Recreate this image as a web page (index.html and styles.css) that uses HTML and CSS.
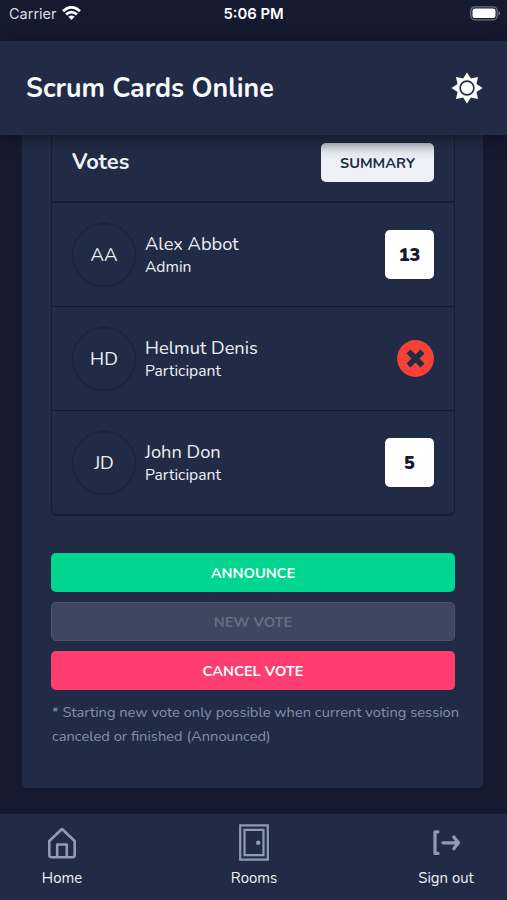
FILE: index.html
```html
<!DOCTYPE html>
<html lang="en">
<head>
<meta charset="utf-8">
<title>Scrum Cards Online</title>
<link rel="stylesheet" href="styles.css">
</head>
<body>
<div class="app">
  <div class="status">
    <div class="status-left"><span class="carrier">Carrier</span>
      <svg class="wifi" width="19" height="15" viewBox="0 0 19 15" fill="none" stroke="#fff" stroke-width="2.8"><path d="M1.100 5.200C6-.1 13-.1 17.900 5.200M4.100 8.600c3.300-3.400 7.500-3.400 10.800 0"/><path d="M9.500 14L6.400 10.800q3.100-2.600 6.200 0z" fill="#fff" stroke="none"/></svg>
    </div>
    <span class="clock">5:06 PM</span>
    <svg class="battery" width="31" height="15" viewBox="0 0 31 15"><rect x=".8" y=".8" width="26.400" height="13" rx="4" fill="none" stroke="#6d7182" stroke-width="1.300"/><rect x="2.500" y="2.500" width="23" height="9.600" rx="2.300" fill="#fff"/><path d="M28.500 5v4.600q1.700-.6 1.700-2.300T28.500 5z" fill="#6d7182"/></svg>
  </div>
  <header class="header">
    <h1 class="title">Scrum Cards Online</h1>
    <svg class="sun" width="32" height="32" viewBox="-16 -16 32 32"><path fill="#fff" d="M0-15.500L3.900-9.500 11-11 9.500-3.900 15.500 0 9.500 3.900 11 11 3.900 9.500 0 15.500-3.900 9.500-11 11-9.500 3.900-15.500 0-9.500-3.900-11-11-3.900-9.500z"/><circle r="6.900" fill="#fff" stroke="#222b45" stroke-width="1.600"/></svg>
  </header>
  <main class="content">
    <section class="card">
      <div class="votes">
        <div class="votes-head"><h2 class="votes-title">Votes</h2><button class="summary">SUMMARY</button></div>
        <div class="row"><div class="avatar">AA</div><div class="person"><div class="name">Alex Abbot</div><div class="role">Admin</div></div><div class="value">13</div></div>
        <div class="row"><div class="avatar">HD</div><div class="person"><div class="name">Helmut Denis</div><div class="role">Participant</div></div>
          <svg class="no-vote" width="37" height="37" viewBox="-18.500 -18.500 37 37"><circle r="18.400" fill="#f44336"/><path d="M-7-7L7 7M7-7L-7 7" stroke="#222b45" stroke-width="5.600"/></svg></div>
        <div class="row"><div class="avatar">JD</div><div class="person"><div class="name">John Don</div><div class="role">Participant</div></div><div class="value">5</div></div>
      </div>
      <div class="actions">
        <button class="btn announce">ANNOUNCE</button>
        <button class="btn new-vote" disabled>NEW VOTE</button>
        <button class="btn cancel">CANCEL VOTE</button>
      </div>
      <p class="note">* Starting new vote only possible when current voting session<br>canceled or finished (Announced)</p>
    </section>
  </main>
  <nav class="tabs">
    <a class="tab"><svg width="38" height="38" viewBox="0 0 38 38" fill="none" stroke="#8f9bb3" stroke-width="2.600" stroke-linejoin="round"><path d="M6.300 17L19 5l12.700 12v14q0 2.300-2.300 2.300H8.600q-2.300 0-2.300-2.300zM14.200 32.500V20.500h9.600v12"/></svg><span>Home</span></a>
    <a class="tab"><svg width="38" height="38" viewBox="0 0 38 38" fill="none" stroke="#8f9bb3" stroke-width="2.200"><path d="M5.200 1.300h27.600v34.400H5.200z"/><path d="M9.500 5.800h19v25.400h-19z"/><circle cx="23.200" cy="18.800" r="2.200" fill="#8f9bb3" stroke="none"/></svg><span>Rooms</span></a>
    <a class="tab"><svg width="38" height="38" viewBox="0 0 38 38" fill="none" stroke="#8f9bb3" stroke-width="3.200" stroke-linecap="round" stroke-linejoin="round"><path d="M11 7.800H8v21.600h3M16 18.800h14.500M26.800 12.900l4.700 5.900-4.700 5.900"/></svg><span>Sign out</span></a>
  </nav>
</div>
</body>
</html>
```
FILE: styles.css
```css
* { box-sizing: border-box; }
body { margin: 0; background: #151a30; color: #edf1f7; font-family: Nunito, Lato, sans-serif; }
.app { width: 507px; height: 900px; display: flex; flex-direction: column; overflow: hidden; }
.status { height: 41px; flex: none; display: grid; grid-template-columns: 1fr auto 1fr; align-items: start; padding: 6px 6px 0 9px; font-family: Inter, sans-serif; font-size: 14.500px; line-height: 16px; color: #d9dce5; }
.status-left { display: flex; gap: 5px; }
.clock { font-weight: 600; font-size: 14.800px; color: #fff; margin-right: 3px; }
.battery { justify-self: end; }
.header { height: 94px; flex: none; background: #222b45; display: flex; align-items: center; justify-content: space-between; padding: 0 24px 0 26px; position: relative; z-index: 1; box-shadow: 0 3px 14px rgba(10, 14, 28, .65); }
.title { margin: 0; font-size: 26.800px; line-height: 36px; font-weight: 700; color: #f7f9fc; white-space: nowrap; }
.content { flex: 1; min-height: 0; padding: 0 24px 26px 22px; }
.card { height: 100%; background: #222b45; border-radius: 0 0 5px 5px; padding: 0 29px; }
.votes { width: 404px; border: solid #171d37; border-width: 0 1.500px 2px; border-radius: 0 0 6px 6px; }
.votes-head { height: 68px; display: flex; align-items: flex-start; justify-content: space-between; padding: 8px 20px 0 20px; border-bottom: 2px solid #171d37; }
.votes-title { margin: 0; font-size: 21.800px; line-height: 39px; font-weight: 700; }
button { font-family: inherit; font-size: 14.600px; font-weight: 700; border: 0; border-radius: 5px; padding: 0; }
.summary { width: 113px; height: 39px; color: #222b45; background: linear-gradient(#b9bfca, #dfe4eb 8px, #edf1f7 16px); }
.row { height: 104px; display: flex; align-items: center; padding: 0 20px; border-bottom: 1px solid #151a33; }
.row:last-child { height: 103px; border-bottom: 0; }
.avatar { width: 64px; height: 64px; border-radius: 50%; border: 1.500px solid #182039; display: flex; align-items: center; justify-content: center; font-size: 18.500px; }
.person { flex: 1; padding-left: 9px; white-space: nowrap; }
.name { font-size: 18.300px; line-height: 24px; }
.role { font-size: 15.700px; line-height: 22px; }
.value { width: 49px; height: 49px; border-radius: 5px; background: #fff; color: #151a30; font-size: 18px; font-weight: 900; display: flex; align-items: center; justify-content: center; }
.actions { display: grid; gap: 10px; margin-top: 37px; width: 404px; }
.btn { height: 39px; color: #fff; }
.announce { background: #00d68f; }
.new-vote { background: #3e4760; color: #666e83; border: 1px solid #4c556c; }
.cancel { background: #ff3d71; }
.note { margin: 10px 0 0 1px; font-size: 14.680px; line-height: 24.300px; color: #8490aa; white-space: nowrap; }
.tabs { height: 86px; flex: none; background: #222b45; display: flex; justify-content: space-between; padding: 10px 17px 0 18px; }
.tab { width: 88px; display: flex; flex-direction: column; align-items: center; font-size: 14.900px; line-height: 20px; gap: 6px; white-space: nowrap; }
```
